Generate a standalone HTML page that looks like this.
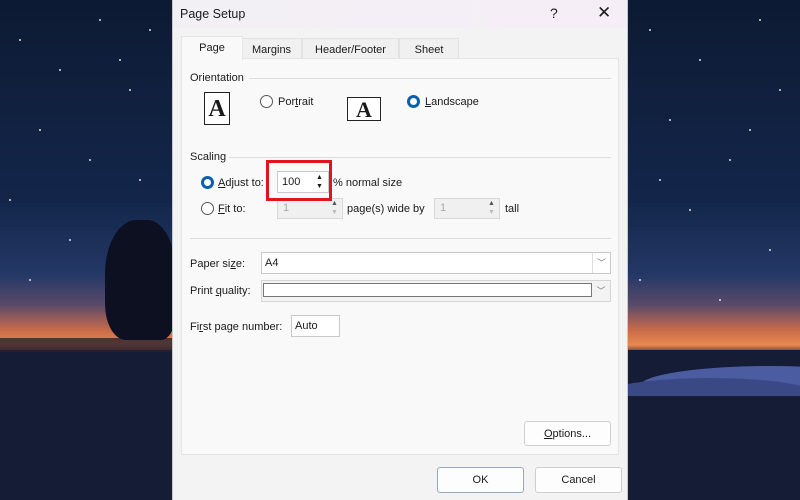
<!DOCTYPE html>
<html><head><style>
*{margin:0;padding:0;box-sizing:border-box}
body{width:800px;height:500px;overflow:hidden;position:relative;font-family:"Liberation Sans",sans-serif;font-size:11px;color:#1a1a1a;
background:linear-gradient(180deg,#0d1a33 0%,#13264a 40%,#243866 55%,#5a4a6a 61%,#c86a4a 66%,#e88a50 69%,#1a2040 71%,#172040 78%,#121a33 100%);}
.a{position:absolute}
.hill{position:absolute;border-radius:50%}
.dlg{left:172px;top:0;width:456px;height:500px;background:#f3f3f3;border-left:1px solid #c8c8c8;border-right:1px solid #c8c8c8;z-index:5}
.title{left:0;top:0;width:100%;height:28px;background:linear-gradient(90deg,#f2f0f5,#f6eef6)}
.panel{left:8px;top:58px;width:438px;height:397px;background:#f9f9f9;border:1px solid #e5e5e5}
.tab{top:38px;height:21px;text-align:center;line-height:22px;background:#f0f0f0;border:1px solid #e2e2e2;border-bottom:none}
.line{height:1px;background:#dcdcdc}
.radio{width:13px;height:13px;border-radius:50%;border:1px solid #555;background:#fff}
.radio.on{border:3.5px solid #0a5fb0;background:#fff}
.in{background:#fff;border:1px solid #c9c9c9}
.btn{background:#fdfdfd;border:1px solid #cfcfcf;border-radius:3px;text-align:center}
u{text-decoration:underline}
</style></head><body>
<div class="a" style="left:0;top:350px;width:800px;height:150px;background:#141c36"></div>
<div class="hill" style="left:640px;top:366px;width:260px;height:40px;background:#4c5ca0"></div>
<div class="hill" style="left:600px;top:378px;width:220px;height:36px;background:#3a4886"></div>
<div class="a" style="left:600px;top:396px;width:200px;height:104px;background:#141c36"></div>
<div class="a" style="left:0;top:338px;width:172px;height:14px;background:#2a2030;opacity:.8"></div>
<div class="a" style="left:105px;top:220px;width:70px;height:120px;background:#0c1020;border-radius:45% 40% 20% 30%"></div>
<svg class="a" style="left:0;top:0" width="800" height="340">
<g fill="#fff" opacity=".85">
<circle cx="20" cy="40" r="1"/><circle cx="60" cy="70" r="1"/><circle cx="100" cy="20" r="1"/><circle cx="130" cy="90" r="1"/><circle cx="40" cy="130" r="1"/><circle cx="90" cy="160" r="1"/><circle cx="150" cy="30" r="1"/><circle cx="10" cy="200" r="1"/><circle cx="70" cy="240" r="1"/><circle cx="140" cy="180" r="1"/><circle cx="30" cy="280" r="1"/><circle cx="120" cy="60" r="1"/>
<circle cx="650" cy="30" r="1"/><circle cx="700" cy="60" r="1"/><circle cx="760" cy="20" r="1"/><circle cx="780" cy="90" r="1"/><circle cx="670" cy="120" r="1"/><circle cx="730" cy="160" r="1"/><circle cx="690" cy="210" r="1"/><circle cx="770" cy="250" r="1"/><circle cx="640" cy="280" r="1"/><circle cx="720" cy="300" r="1"/><circle cx="750" cy="130" r="1"/><circle cx="660" cy="180" r="1"/>
</g></svg>
<div class="a dlg">
<div class="a title"></div>
<div class="a" style="left:7px;top:7px;font-size:12.5px">Page Setup</div>
<div class="a" style="left:377px;top:5px;font-size:14px">?</div>
<div class="a" style="left:424px;top:3px;font-size:17px">✕</div>
<div class="a tab" style="left:68px;width:61px">Margins</div>
<div class="a tab" style="left:129px;width:97px">Header/Footer</div>
<div class="a tab" style="left:226px;width:60px">Sheet</div>
<div class="a panel"></div>
<div class="a tab" style="left:8px;width:62px;top:36px;height:24px;background:#f9f9f9;border-color:#e5e5e5">Page</div>
<div class="a" style="left:17px;top:72px">Orientation</div>
<div class="a line" style="left:76px;top:78px;width:362px"></div>
<div class="a" style="left:31px;top:92px;width:26px;height:33px;border:1px solid #222;background:#fff;font:bold 24px 'Liberation Serif',serif;text-align:center;line-height:32px">A</div>
<div class="a radio" style="left:87px;top:95px"></div>
<div class="a" style="left:105px;top:96px">Por<u>t</u>rait</div>
<div class="a" style="left:174px;top:97px;width:34px;height:24px;border:1px solid #222;background:#fff;font:bold 22px 'Liberation Serif',serif;text-align:center;line-height:24px">A</div>
<div class="a radio on" style="left:234px;top:95px"></div>
<div class="a" style="left:252px;top:96px"><u>L</u>andscape</div>
<div class="a" style="left:17px;top:151px">Scaling</div>
<div class="a line" style="left:56px;top:157px;width:382px"></div>
<div class="a radio on" style="left:28px;top:176px"></div>
<div class="a" style="left:45px;top:177px"><u>A</u>djust to:</div>
<div class="a in" style="left:104px;top:171px;width:52px;height:22px;padding:4px 4px">100</div>
<div class="a" style="left:143px;top:173px;font-size:7px;line-height:9px">▲<br>▼</div>
<div class="a" style="left:160px;top:177px">% normal size</div>
<div class="a radio" style="left:28px;top:202px"></div>
<div class="a" style="left:45px;top:203px"><u>F</u>it to:</div>
<div class="a" style="left:104px;top:198px;width:66px;height:21px;background:#f0f0f0;border:1px solid #d8d8d8;color:#aaa;padding:3px 5px">1</div>
<div class="a" style="left:158px;top:199px;font-size:7px;line-height:9px;color:#555">▲<br><span style="color:#bbb">▼</span></div>
<div class="a" style="left:174px;top:203px">page(s) wide by</div>
<div class="a" style="left:261px;top:198px;width:66px;height:21px;background:#f0f0f0;border:1px solid #d8d8d8;color:#aaa;padding:3px 5px">1</div>
<div class="a" style="left:315px;top:199px;font-size:7px;line-height:9px;color:#555">▲<br><span style="color:#bbb">▼</span></div>
<div class="a" style="left:332px;top:203px">tall</div>
<div class="a" style="left:93px;top:160px;width:66px;height:41px;border:3px solid #e0141c;z-index:3"></div>
<div class="a line" style="left:17px;top:238px;width:421px"></div>
<div class="a" style="left:17px;top:258px">Paper si<u>z</u>e:</div>
<div class="a in" style="left:88px;top:252px;width:350px;height:22px;padding:4px 3px">A4</div>
<div class="a" style="left:419px;top:253px;width:18px;height:20px;border-left:1px solid #ddd;text-align:center;color:#777;font-size:9px;line-height:20px">﹀</div>
<div class="a" style="left:17px;top:285px">Print <u>q</u>uality:</div>
<div class="a" style="left:88px;top:280px;width:350px;height:22px;background:#f3f3f3;border:1px solid #d5d5d5"></div>
<div class="a" style="left:90px;top:283px;width:329px;height:14px;background:#fff;border:1px solid #777"></div>
<div class="a" style="left:419px;top:281px;width:18px;height:20px;text-align:center;color:#777;font-size:9px;line-height:20px">﹀</div>
<div class="a" style="left:17px;top:321px">Fi<u>r</u>st page number:</div>
<div class="a in" style="left:118px;top:315px;width:49px;height:22px;padding:4px 3px">Auto</div>
<div class="a btn" style="left:351px;top:421px;width:87px;height:25px;line-height:24px"><u>O</u>ptions...</div>
<div class="a btn" style="left:264px;top:467px;width:87px;height:26px;line-height:25px;border-color:#9ab">OK</div>
<div class="a btn" style="left:362px;top:467px;width:87px;height:26px;line-height:25px">Cancel</div>
</div>
</body></html>
